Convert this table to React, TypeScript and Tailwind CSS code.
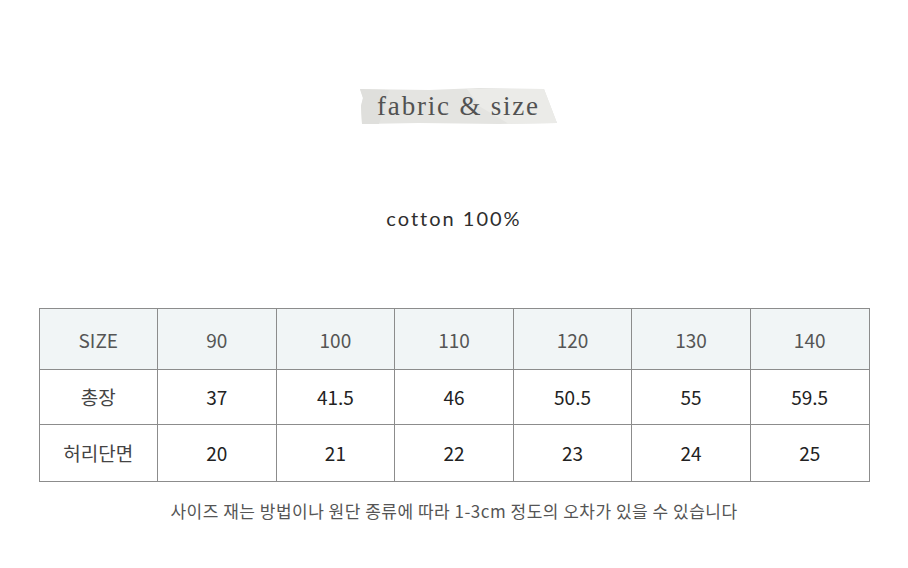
const SIZES = ["90", "100", "110", "120", "130", "140"];

const ROWS = [
  { label: "총장", values: ["37", "41.5", "46", "50.5", "55", "59.5"], h: "h-[55px]" },
  { label: "허리단면", values: ["20", "21", "22", "23", "24", "25"], h: "h-[57px]" },
];

const CELL = "border border-[#8c8c8c] text-center align-middle";

function Tape() {
  return (
    <div className="relative h-[38px] w-[199px]">
      <svg className="absolute inset-0" width="199" height="38" viewBox="0 0 199 38">
        <polygon
          points="1,2 70,3 120,1 185,2 198,36 140,37 60,36 3,37 2,19 4,11"
          fill="#e4e4e1"
        />
        <polygon points="108,2 185,2 198,36 150,37 120,19" fill="#ebebe8" />
        <polygon points="1,2 30,3 20,37 3,37 2,19 4,11" fill="#dfdfdc" />
      </svg>
      <span className="absolute inset-0 flex items-center justify-center pt-[1px] font-['Liberation_Serif',serif] text-[27px] tracking-[1.8px] text-[#525252]">
        fabric &amp; size
      </span>
    </div>
  );
}

export default function App() {
  return (
    <div className="flex h-[568px] w-[908px] flex-col items-center bg-white font-['Noto_Sans_CJK_KR','Noto_Sans',sans-serif]">
      <div className="mt-[87px] ml-[9px]">
        <Tape />
      </div>
      <p className="mt-[78px] font-['Lato',sans-serif] text-[20px] tracking-[2px] text-[#2e2e2e]">cotton 100%</p>
      <table className="mt-[75px] w-[831px] table-fixed border-collapse">
        <tbody>
          <tr className="h-[61px] bg-[#f1f5f6] text-[19px] text-[#555]">
            <td className={`${CELL} pt-[3px]`}>SIZE</td>
            {SIZES.map((s) => (
              <td key={s} className={`${CELL} pt-[3px]`}>
                {s}
              </td>
            ))}
          </tr>
          {ROWS.map((row) => (
            <tr key={row.label} className={`${row.h} text-[19px] text-[#222]`}>
              <td className={`${CELL} text-[#444]`}>{row.label}</td>
              {row.values.map((v, i) => (
                <td key={i} className={CELL}>
                  {v}
                </td>
              ))}
            </tr>
          ))}
        </tbody>
      </table>
      <p className="mt-[16px] text-[17px] tracking-[0.5px] text-[#555]">
        사이즈 재는 방법이나 원단 종류에 따라 1-3cm 정도의 오차가 있을 수 있습니다
      </p>
    </div>
  );
}
